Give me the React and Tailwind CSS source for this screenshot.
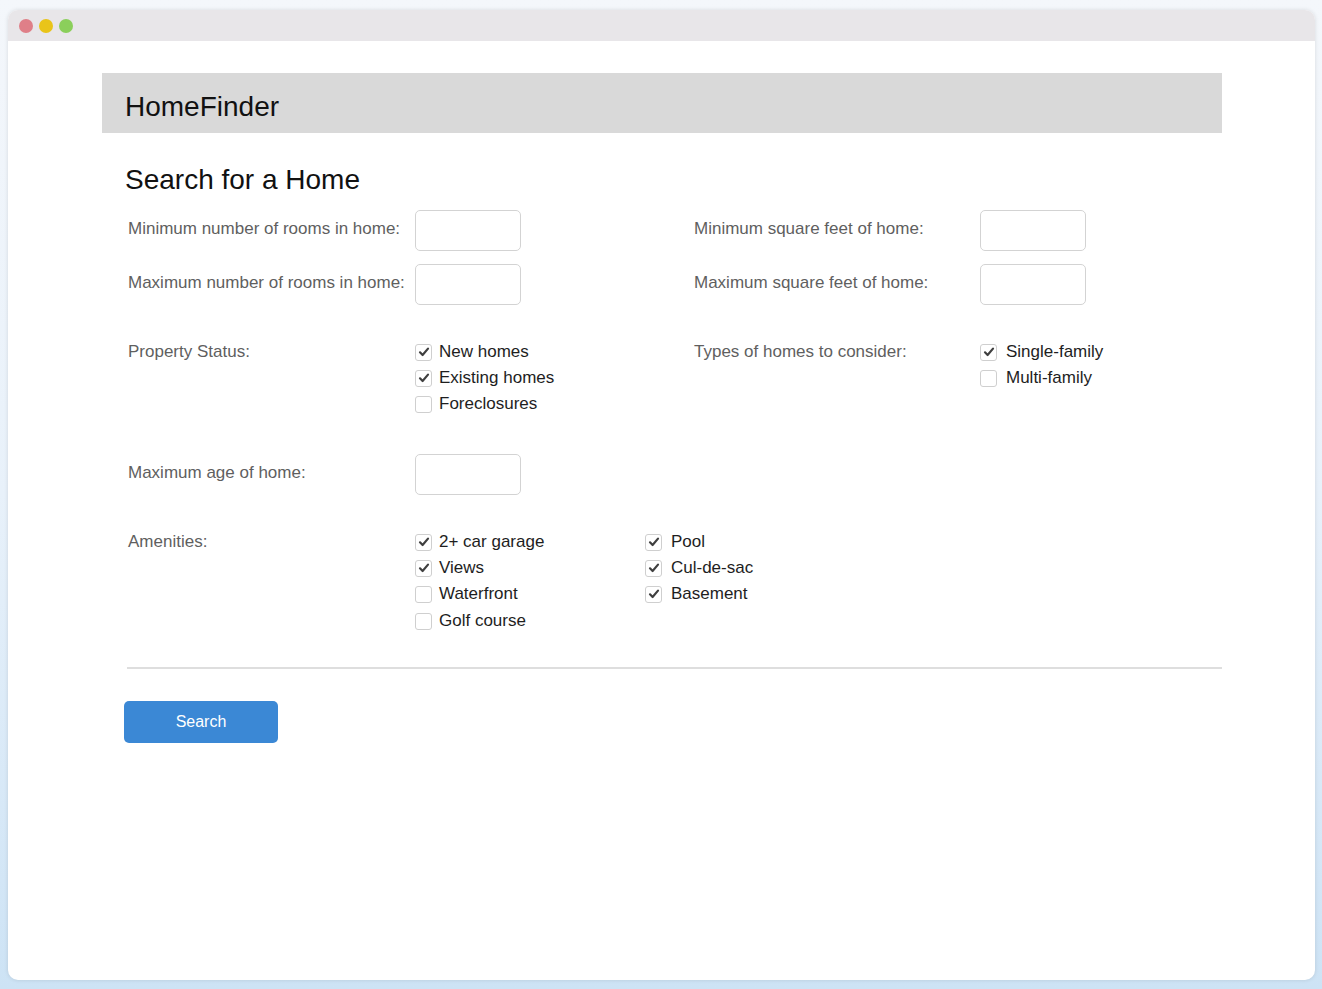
import React from 'react';

const font = { fontFamily: '"Liberation Sans", Arial, Helvetica, sans-serif' };

function Check({ checked, label, gap = 'ml-[7px]' }) {
  return (
    <div className="flex items-center h-[26px]">
      <span className="w-[17px] h-[17px] rounded-[3px] border border-[#cfcfcf] bg-white flex items-center justify-center">
        {checked && (
          <svg width="12" height="12" viewBox="0 0 12 12">
            <path d="M2 6.3 L4.6 9 L10 2.6" fill="none" stroke="#3f3f3f" strokeWidth="2.2" strokeLinecap="round" strokeLinejoin="round" />
          </svg>
        )}
      </span>
      <span className={`${gap} text-[17px] text-[#1e1e1e]`}>{label}</span>
    </div>
  );
}

function Field() {
  return <div className="w-[106px] h-[41px] rounded-[5px] border border-[#d3d3d3] bg-white" />;
}

export default function App() {
  return (
    <div className="min-h-screen w-full bg-gradient-to-b from-[#f4f7fb] via-[#e8f1fa] to-[#cde3f5] pt-[10px] pl-[8px]" style={font}>
      <div className="w-[1307px] h-[970px] rounded-[10px] bg-white overflow-hidden shadow-[0_0_4px_rgba(0,0,0,0.12)] flex flex-col">
        {/* title bar */}
        <div className="h-[31px] bg-[#e8e6e9] flex items-center pl-[11px] gap-[6px] shrink-0">
          <span className="w-[14px] h-[14px] rounded-full bg-[#df7f88]" />
          <span className="w-[14px] h-[14px] rounded-full bg-[#e9c419]" />
          <span className="w-[14px] h-[14px] rounded-full bg-[#8bcf5b]" />
        </div>

        <div className="ml-[94px] w-[1120px] mt-[32px]">
          {/* header */}
          <div className="h-[60px] bg-[#d9d9d9] flex items-center pl-[23px] pt-[7px]">
            <span className="text-[28px] text-[#111]">HomeFinder</span>
          </div>

          <h1 className="mt-[30px] pl-[23px] text-[28px] leading-[34px] text-[#111]">Search for a Home</h1>

          <div className="pl-[26px] text-[17px] text-[#5f5f5f]">
            {/* rooms / square feet */}
            <div className="mt-[13px] flex flex-col gap-[13px]">
              <div className="flex items-center">
                <span className="w-[287px] pb-[4px]">Minimum number of rooms in home:</span>
                <div className="w-[279px]"><Field /></div>
                <span className="w-[286px] pb-[4px]">Minimum square feet of home:</span>
                <Field />
              </div>
              <div className="flex items-center">
                <span className="w-[287px] pb-[4px]">Maximum number of rooms in home:</span>
                <div className="w-[279px]"><Field /></div>
                <span className="w-[286px] pb-[4px]">Maximum square feet of home:</span>
                <Field />
              </div>
            </div>

            {/* status / types */}
            <div className="mt-[34px] flex items-start">
              <span className="w-[287px] leading-[26px]">Property Status:</span>
              <div className="w-[279px]">
                <Check checked label="New homes" />
                <Check checked label="Existing homes" />
                <Check label="Foreclosures" />
              </div>
              <span className="w-[286px] leading-[26px]">Types of homes to consider:</span>
              <div>
                <Check checked label="Single-family" gap="ml-[9px]" />
                <Check label="Multi-family" gap="ml-[9px]" />
              </div>
            </div>

            {/* age */}
            <div className="mt-[37px] flex items-center">
              <span className="w-[287px] pb-[4px]">Maximum age of home:</span>
              <Field />
            </div>

            {/* amenities */}
            <div className="mt-[34px] flex items-start">
              <span className="w-[287px] leading-[26px]">Amenities:</span>
              <div className="w-[230px]">
                <Check checked label="2+ car garage" />
                <Check checked label="Views" />
                <Check label="Waterfront" />
                <div className="mt-[1px]"><Check label="Golf course" /></div>
              </div>
              <div>
                <Check checked label="Pool" gap="ml-[9px]" />
                <Check checked label="Cul-de-sac" gap="ml-[9px]" />
                <Check checked label="Basement" gap="ml-[9px]" />
              </div>
            </div>
          </div>

          <div className="mt-[33px] ml-[25px] h-[2px] bg-[#dedede]" />

          <button className="mt-[32px] ml-[22px] w-[154px] h-[42px] rounded-[5px] bg-[#3b88d5] text-white text-[16px]">
            Search
          </button>
        </div>
      </div>
    </div>
  );
}
